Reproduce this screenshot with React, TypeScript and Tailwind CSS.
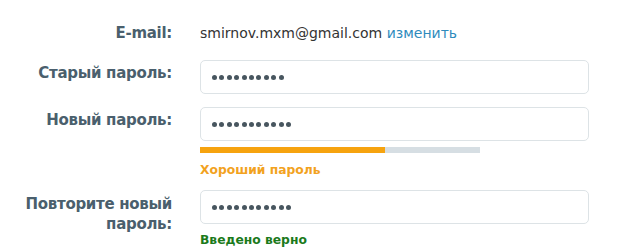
import React from "react";

const Dots = ({ n }: { n: number }) => (
  <div className="flex items-center gap-[2.4px]">
    {Array.from({ length: n }).map((_, i) => (
      <span key={i} className="block w-[5px] h-[5px] rounded-full bg-[#48565f]" />
    ))}
  </div>
);

const Input = ({ n }: { n: number }) => (
  <div className="h-[34px] w-[389px] rounded-[5px] border border-[#dde3e6] bg-white flex items-center pl-[11px]">
    <Dots n={n} />
  </div>
);

export default function App() {
  return (
    <div
      className="w-[640px] h-[250px] bg-white pt-[23px] overflow-hidden"
      style={{ fontFamily: '"DejaVu Sans", Verdana, sans-serif' }}
    >
      {/* E-mail */}
      <div className="flex">
        <div className="w-[172px] text-right text-[15px] tracking-[-0.3px] leading-[20px] font-bold text-[#4a5f6d]">E-mail:</div>
        <div className="ml-[28px] text-[14px] leading-[20px] text-[#333]">
          smirnov.mxm@gmail.com <span className="text-[#2e8bbd]">изменить</span>
        </div>
      </div>

      {/* Old password */}
      <div className="flex mt-[17px]">
        <div className="w-[172px] pt-[4px] text-right text-[15px] tracking-[-0.3px] leading-[18px] font-bold text-[#4a5f6d]">Старый пароль:</div>
        <div className="ml-[28px]">
          <Input n={10} />
        </div>
      </div>

      {/* New password */}
      <div className="flex mt-[13px]">
        <div className="w-[172px] pt-[4px] text-right text-[15px] tracking-[-0.3px] leading-[18px] font-bold text-[#4a5f6d]">Новый пароль:</div>
        <div className="ml-[28px]">
          <Input n={11} />
          <div className="mt-[6px] flex h-[6px] w-[280px]">
            <div className="w-[185px] bg-[#f6a30f]" />
            <div className="flex-1 bg-[#d6dee3]" />
          </div>
          <div className="mt-[9px] text-[12.3px] leading-[16px] font-bold text-[#f2a21e]">Хороший пароль</div>
        </div>
      </div>

      {/* Repeat password */}
      <div className="flex mt-[12px]">
        <div className="w-[172px] pt-[4px] text-right text-[15px] tracking-[-0.3px] leading-[20px] font-bold text-[#4a5f6d] whitespace-nowrap">
          Повторите новый
          <br />
          пароль:
        </div>
        <div className="ml-[28px]">
          <Input n={11} />
          <div className="mt-[8px] text-[12.3px] leading-[16px] font-bold text-[#1b7a1b]">Введено верно</div>
        </div>
      </div>
    </div>
  );
}
